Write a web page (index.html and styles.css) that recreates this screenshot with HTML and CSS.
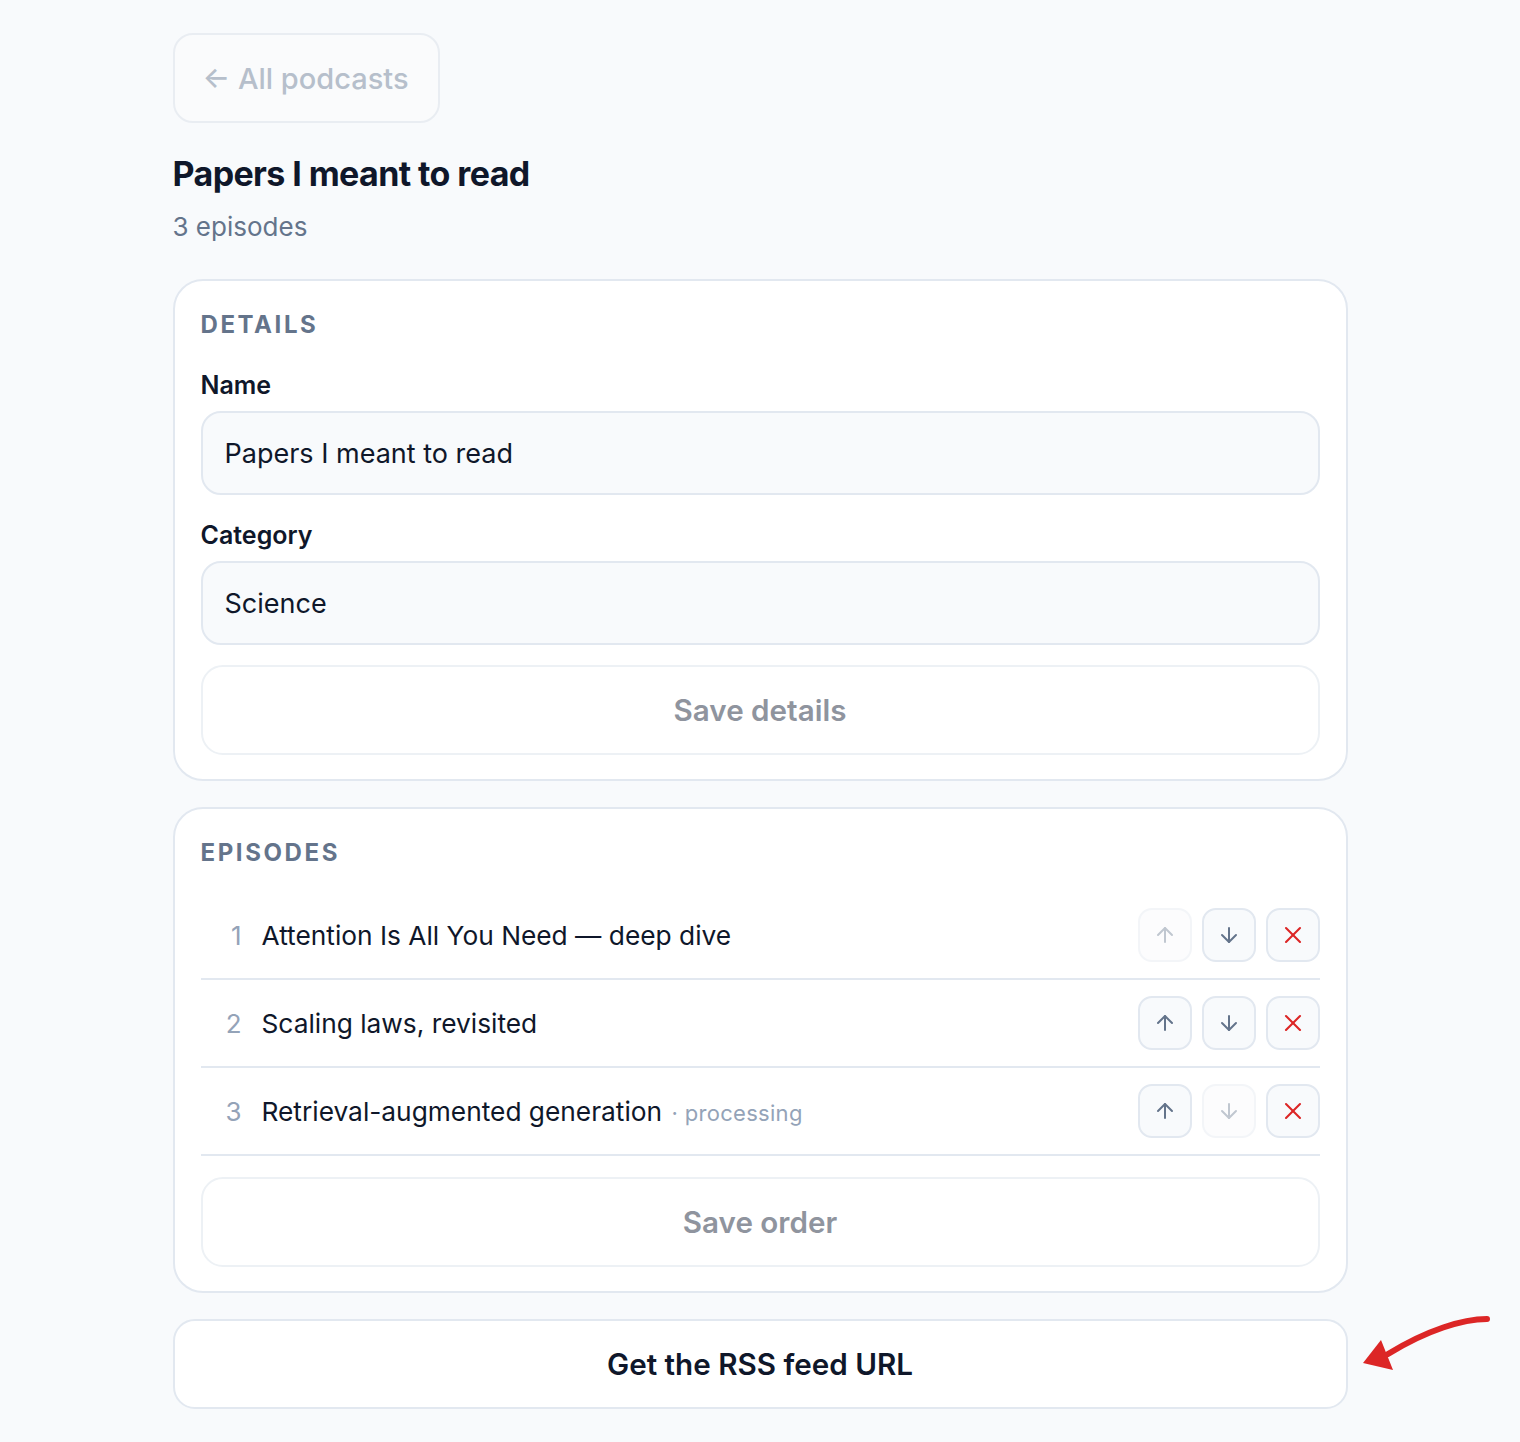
FILE: index.html
```html
<!DOCTYPE html>
<html lang="en">
<head>
    <meta charset="UTF-8">
    <meta name="viewport" content="width=device-width, initial-scale=1.0">
    <title>Papers I meant to read</title>
    <link rel="stylesheet" href="styles.css">
</head>
<body>
<main class="container">
    <a href="#" class="back-link">← All podcasts</a>

    <h1 class="podcast-title">Papers I meant to read</h1>
    <p class="podcast-meta">3 episodes</p>

    <section class="card">
        <h2 class="card-heading">Details</h2>
        <form class="details-form">
            <label class="field">
                <span class="field-label">Name</span>
                <input type="text" class="field-input" value="Papers I meant to read">
            </label>
            <label class="field">
                <span class="field-label">Category</span>
                <input type="text" class="field-input" value="Science">
            </label>
            <button type="submit" class="btn-block" disabled>Save details</button>
        </form>
    </section>

    <section class="card">
        <h2 class="card-heading">Episodes</h2>
        <ol class="episode-list">
            <li class="episode">
                <span class="ep-num">1</span>
                <span class="ep-title">Attention Is All You Need — deep dive</span>
                <div class="ep-actions">
                    <button class="icon-btn" disabled aria-label="Move up">
                        <svg viewBox="0 0 24 24"><path d="m5 12 7-7 7 7"/><path d="M12 19V5"/></svg>
                    </button>
                    <button class="icon-btn" aria-label="Move down">
                        <svg viewBox="0 0 24 24"><path d="M12 5v14"/><path d="m19 12-7 7-7-7"/></svg>
                    </button>
                    <button class="icon-btn danger" aria-label="Remove">
                        <svg viewBox="0 0 24 24"><path d="M18 6 6 18"/><path d="m6 6 12 12"/></svg>
                    </button>
                </div>
            </li>
            <li class="episode">
                <span class="ep-num">2</span>
                <span class="ep-title">Scaling laws, revisited</span>
                <div class="ep-actions">
                    <button class="icon-btn" aria-label="Move up">
                        <svg viewBox="0 0 24 24"><path d="m5 12 7-7 7 7"/><path d="M12 19V5"/></svg>
                    </button>
                    <button class="icon-btn" aria-label="Move down">
                        <svg viewBox="0 0 24 24"><path d="M12 5v14"/><path d="m19 12-7 7-7-7"/></svg>
                    </button>
                    <button class="icon-btn danger" aria-label="Remove">
                        <svg viewBox="0 0 24 24"><path d="M18 6 6 18"/><path d="m6 6 12 12"/></svg>
                    </button>
                </div>
            </li>
            <li class="episode">
                <span class="ep-num">3</span>
                <span class="ep-title">Retrieval-augmented generation <span class="ep-status">· processing</span></span>
                <div class="ep-actions">
                    <button class="icon-btn" aria-label="Move up">
                        <svg viewBox="0 0 24 24"><path d="m5 12 7-7 7 7"/><path d="M12 19V5"/></svg>
                    </button>
                    <button class="icon-btn" disabled aria-label="Move down">
                        <svg viewBox="0 0 24 24"><path d="M12 5v14"/><path d="m19 12-7 7-7-7"/></svg>
                    </button>
                    <button class="icon-btn danger" aria-label="Remove">
                        <svg viewBox="0 0 24 24"><path d="M18 6 6 18"/><path d="m6 6 12 12"/></svg>
                    </button>
                </div>
            </li>
        </ol>
        <button type="button" class="btn-block" disabled>Save order</button>
    </section>

    <div class="feed-row">
        <button type="button" class="btn-block btn-feed">Get the RSS feed URL</button>
        <!-- hand-drawn pointer at the feed button -->
        <svg class="pointer" viewBox="0 0 140 68" aria-hidden="true">
            <path d="M132 9 C 108 9, 72 20, 33 44" fill="none" stroke="#dc2626" stroke-width="6" stroke-linecap="round"/>
            <polygon points="8,53 26,30 38,60" fill="#dc2626"/>
        </svg>
    </div>
</main>
</body>
</html>
```

FILE: styles.css
```css
:root {
    --page-bg: #f8fafc;
    --card-bg: #ffffff;
    --border: #e2e8f0;
    --border-soft: #edf1f5;
    --text: #0f172a;
    --muted: #64748b;
    --faint: #94a3b8;
    --danger: #dc2626;
}
* {
    box-sizing: border-box;
}
body {
    font-family: Inter, "Noto Sans", sans-serif;
    margin: 0;
    padding: 0;
    background-color: var(--page-bg);
    color: var(--text);
}
.container {
    max-width: 1175px;
    margin: 0 auto;
    padding: 33px 0 32px;
}
.back-link {
    display: inline-flex;
    align-items: center;
    height: 90px;
    padding: 0 29px 0 28px;
    border: 2px solid #e9edf2;
    border-radius: 20px;
    background-color: #fafbfc;
    color: #b6bfcb;
    font-size: 29px;
    font-weight: 500;
    text-decoration: none;
}
.podcast-title {
    margin: 30px 0 0;
    font-size: 34px;
    line-height: 42px;
    font-weight: 700;
    letter-spacing: -0.6px;
}
.podcast-meta {
    margin: 14px 0 0;
    font-size: 26px;
    line-height: 36px;
    color: var(--muted);
}
.card {
    margin-top: 34px;
    padding: 28px 26px 24px;
    background-color: var(--card-bg);
    border: 2px solid var(--border);
    border-radius: 30px;
}
.card + .card {
    margin-top: 26px;
}
.card-heading {
    margin: 0;
    font-size: 24px;
    line-height: 32px;
    font-weight: 700;
    text-transform: uppercase;
    letter-spacing: 2.6px;
    color: var(--muted);
}
.details-form {
    display: flex;
    flex-direction: column;
    margin-top: 28px;
}
.field {
    display: flex;
    flex-direction: column;
    gap: 10px;
    margin-bottom: 24px;
}
.field + .field {
    margin-bottom: 20px;
}
.field-label {
    font-size: 25px;
    line-height: 32px;
    font-weight: 600;
}
.field-input {
    height: 84px;
    padding: 0 22px;
    border: 2px solid var(--border);
    border-radius: 20px;
    background-color: var(--page-bg);
    color: var(--text);
    font-family: inherit;
    font-size: 27px;
}
.btn-block {
    display: block;
    width: 100%;
    height: 90px;
    border: 2px solid var(--border);
    border-radius: 22px;
    background-color: var(--card-bg);
    color: var(--text);
    font-family: inherit;
    font-size: 29.6px;
    font-weight: 600;
    cursor: pointer;
}
.btn-block:disabled {
    border-color: var(--border-soft);
    color: #8f949e;
    cursor: default;
}
.episode-list {
    list-style: none;
    margin: 23px 0 21px;
    padding: 0;
}
.episode {
    display: flex;
    align-items: center;
    gap: 20px;
    padding: 16px 0;
    border-bottom: 2px solid var(--border);
}
.ep-num {
    width: 41px;
    text-align: right;
    font-size: 26px;
    color: var(--faint);
}
.ep-title {
    flex: 1;
    font-size: 26.3px;
}
.ep-status {
    margin-left: 2px;
    font-size: 22px;
    color: var(--faint);
    letter-spacing: 0.3px;
}
.ep-actions {
    display: flex;
    gap: 10px;
}
.icon-btn {
    display: flex;
    align-items: center;
    justify-content: center;
    width: 54px;
    height: 54px;
    padding: 0;
    border: 2px solid var(--border);
    border-radius: 14px;
    background-color: var(--page-bg);
    color: var(--muted);
    cursor: pointer;
}
.icon-btn svg {
    width: 24px;
    height: 24px;
    fill: none;
    stroke: currentColor;
    stroke-width: 2;
    stroke-linecap: round;
    stroke-linejoin: round;
}
.icon-btn.danger {
    color: var(--danger);
}
.icon-btn.danger svg {
    width: 28px;
    height: 28px;
    stroke-width: 1.8;
}
.icon-btn:disabled {
    opacity: 0.4;
    cursor: default;
}
.feed-row {
    position: relative;
    margin-top: 26px;
}
.btn-feed {
    color: var(--text);
}
.pointer {
    position: absolute;
    left: 1182px;
    top: -9px;
    width: 140px;
    height: 68px;
}
```
